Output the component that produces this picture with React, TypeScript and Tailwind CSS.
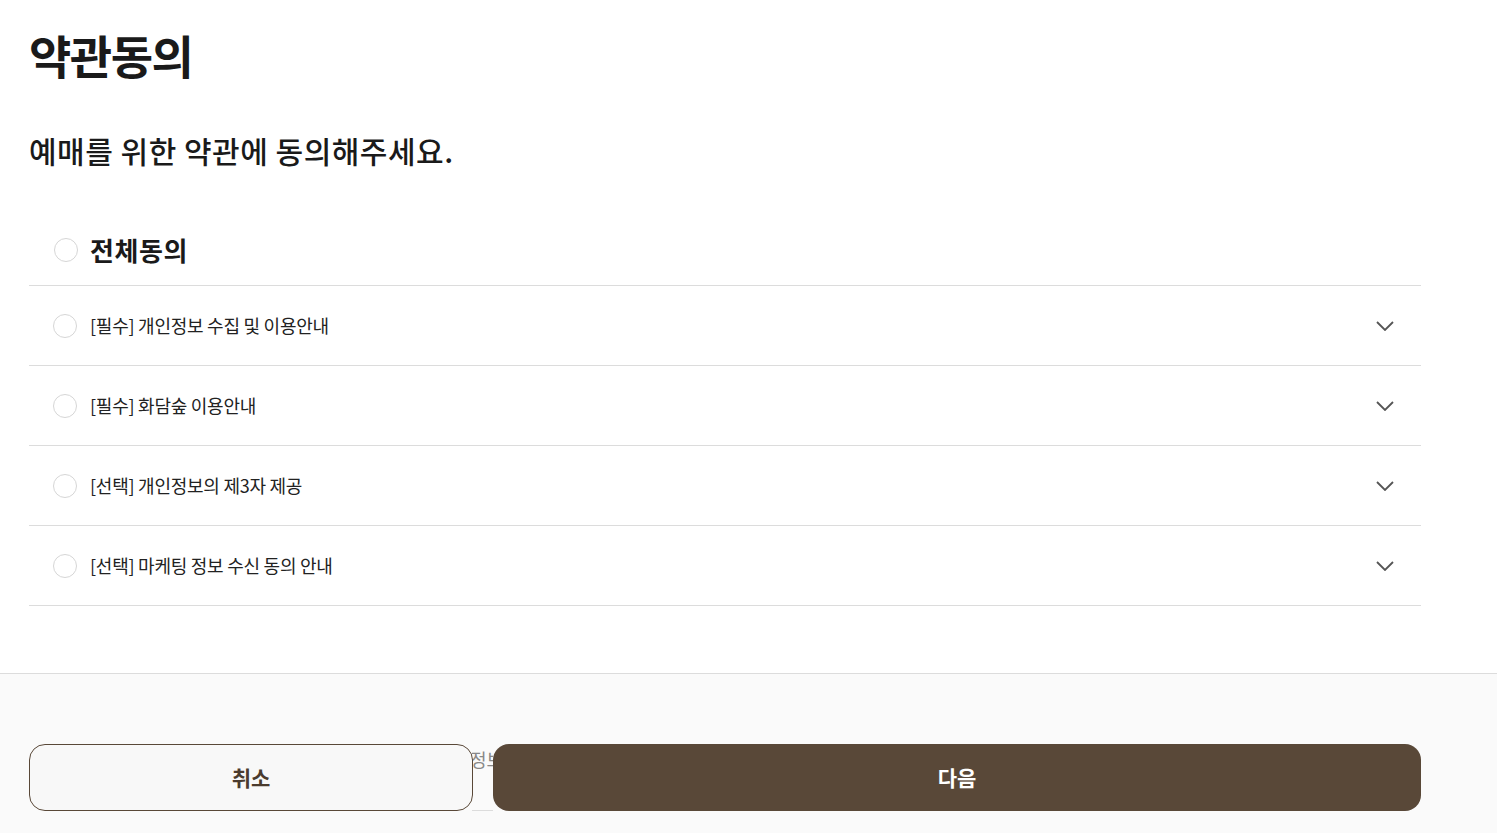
import { useState } from "react"

const terms = [
  "[필수] 개인정보 수집 및 이용안내",
  "[필수] 화담숲 이용안내",
  "[선택] 개인정보의 제3자 제공",
  "[선택] 마케팅 정보 수신 동의 안내",
]

function Circle({ checked }: { checked: boolean }) {
  return (
    <span
      className={
        "block w-6 h-6 rounded-full border shrink-0 " +
        (checked ? "border-[#594838] bg-[#594838]" : "border-[#d6d6d6] bg-white")
      }
    />
  )
}

function Chevron() {
  return (
    <svg width="18" height="10" viewBox="0 0 18 10" fill="none">
      <path d="M1 1l8 8 8-8" stroke="#555" strokeWidth="1.8" />
    </svg>
  )
}

export default function App() {
  const [checked, setChecked] = useState<boolean[]>([false, false, false, false])
  const all = checked.every(Boolean)

  return (
    <div
      className="min-h-[833px] flex flex-col bg-white text-[#1a1a1a]"
      style={{ fontFamily: '"Noto Sans CJK KR", "Noto Sans", sans-serif' }}
    >
      <div className="pl-[29px] pt-[18px]">
        <div className="w-[1392px]">
          <h1 className="text-[46px] leading-[72px] font-bold tracking-[-1.5px]">약관동의</h1>
          <p className="mt-[38px] text-[30px] leading-[44px] font-medium tracking-[0.5px]">
            예매를 위한 약관에 동의해주세요.
          </p>

          <div className="mt-[46px]">
            <button
              className="flex items-center gap-[12px] pl-[25px] pb-[4px] h-[68px] w-full border-b border-[#dcdcdc]"
              onClick={() => setChecked(checked.map(() => !all))}
            >
              <Circle checked={all} />
              <span className="text-[26px] font-bold tracking-[0.6px]">전체동의</span>
            </button>
            {terms.map((t, i) => (
              <div key={t} className="flex items-center h-[80px] border-b border-[#dcdcdc] pl-[24px] pr-[27px]">
                <button
                  className="flex items-center gap-[13px]"
                  onClick={() => setChecked(checked.map((c, j) => (j === i ? !c : c)))}
                >
                  <Circle checked={checked[i]} />
                  <span className="text-[18px] tracking-[-0.25px] text-[#222]">{t}</span>
                </button>
                <span className="ml-auto">
                  <Chevron />
                </span>
              </div>
            ))}
          </div>
        </div>
      </div>

      <div className="mt-[67px] flex-1 bg-[#fafafa] border-t border-[#dcdcdc] px-[29px] pt-[70px]">
        <div className="flex w-[1392px] h-[67px]">
          <button className="w-[444px] h-full rounded-[16px] border border-[#594838] bg-[#f8f8f8] text-[21px] font-bold text-[#4a3b2e] z-10">
            취소
          </button>
          <div className="w-[21px] h-full overflow-hidden -ml-[1px] relative border-b border-[#dcdcdc] mb-[3px]">
            <span className="block mt-[2px] -ml-[2px] text-[18px] text-[#888] whitespace-nowrap">정보</span>
          </div>
          <button className="flex-1 h-full rounded-[16px] bg-[#594838] text-[21px] font-bold text-white">
            다음
          </button>
        </div>
      </div>
    </div>
  )
}
